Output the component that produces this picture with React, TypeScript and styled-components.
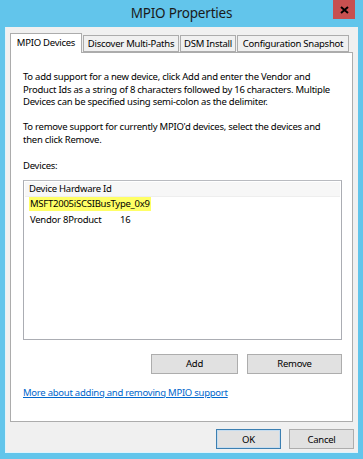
import styled, { createGlobalStyle } from "styled-components";

const GlobalStyle = createGlobalStyle`
  html, body {
    margin: 0;
    padding: 0;
    background: #62c5eb;
  }
  * {
    box-sizing: border-box;
  }
`;

const Window = styled.div`
  width: 363px;
  height: 459px;
  background: #62c5eb;
  display: flex;
  flex-direction: column;
  font-family: "Noto Sans", "Open Sans", sans-serif;
  font-size: 9.5px;
  letter-spacing: -0.25px;
  color: #000;
  overflow: hidden;
`;

const TitleBar = styled.div`
  height: 27px;
  display: grid;
  grid-template-columns: 1fr auto 1fr;
  align-items: start;
`;

const Title = styled.div`
  grid-column: 2;
  padding-top: 4px;
  font-size: 13.5px;
  letter-spacing: -0.2px;
  color: #1a1a1a;
  line-height: 19px;
`;

const CloseButton = styled.div`
  grid-column: 3;
  justify-self: end;
  margin-right: 8px;
  width: 22px;
  height: 19px;
  background: #c75050;
  display: flex;
  align-items: center;
  justify-content: center;
`;

const Client = styled.div`
  flex: 1;
  margin: 0 5px 6px 5px;
  background: #f0f0f0;
  border-left: 1px solid #dff3fb;
  border-bottom: 1px solid #dff3fb;
  padding: 5px 4px 0 4px;
  display: flex;
  flex-direction: column;
`;

const TabStrip = styled.div`
  display: flex;
  align-items: flex-end;
  height: 20px;
  position: relative;
  z-index: 1;
`;

const Tab = styled.div<{ $width: number; $active?: boolean }>`
  width: ${(p) => p.$width}px;
  height: ${(p) => (p.$active ? "20px" : "17px")};
  margin-bottom: ${(p) => (p.$active ? "-1px" : "0")};
  margin-left: ${(p) => (p.$active ? "0" : "1px")};
  padding-bottom: ${(p) => (p.$active ? "2px" : "0")};
  background: ${(p) => (p.$active ? "#ffffff" : "#f0f0f0")};
  border: 1px solid #acacac;
  border-bottom: ${(p) => (p.$active ? "none" : "1px solid #acacac")};
  display: flex;
  align-items: center;
  justify-content: center;
  white-space: nowrap;
`;

const Panel = styled.div`
  height: 370px;
  width: 343px;
  background: #fff;
  border: 1px solid #acacac;
  padding: 18px 10px 0 12px;
  display: flex;
  flex-direction: column;
`;

const Paragraph = styled.p`
  margin: 0 0 12.5px 0;
  line-height: 12.5px;
`;

const Label = styled.div`
  line-height: 13px;
`;

const ListBox = styled.div`
  margin-top: 8px;
  height: 160px;
  border: 1px solid #abadb3;
  border-top-color: #b9bbc0;
  padding: 1px;
  display: flex;
  flex-direction: column;
`;

const ListHeader = styled.div`
  height: 15px;
  background: #f7f7f7;
  border-bottom: 1px solid #eeeeee;
  padding-left: 4px;
  line-height: 14px;
`;

const ListRow = styled.div`
  height: 15px;
  display: flex;
  align-items: center;
  padding-left: 4px;
`;

const Highlight = styled.span`
  background: #ffff66;
  padding: 0 1px;
  line-height: 14px;
`;

const Cell = styled.span<{ $width?: number }>`
  display: inline-block;
  width: ${(p) => (p.$width ? `${p.$width}px` : "auto")};
  padding-left: 1px;
`;

const ButtonRow = styled.div<{ $top: number }>`
  display: flex;
  justify-content: flex-end;
  gap: 9px;
  margin-top: ${(p) => p.$top}px;
`;

const Button = styled.div<{ $width: number; $default?: boolean }>`
  width: ${(p) => p.$width}px;
  height: 20px;
  background: #e1e1e1;
  border: 1px solid ${(p) => (p.$default ? "#3c7fb1" : "#adadad")};
  box-shadow: ${(p) => (p.$default ? "inset 0 0 0 1px #c5dcef" : "none")};
  display: flex;
  align-items: center;
  justify-content: center;
`;

const Link = styled.a`
  margin-top: 12px;
  color: #0066cc;
  text-decoration: underline;
  line-height: 13px;
  align-self: flex-start;
`;

const FooterButtons = styled(ButtonRow)`
  gap: 8px;
`;

export default function App() {
  return (
    <Window>
      <GlobalStyle />
      <TitleBar>
        <Title>MPIO Properties</Title>
        <CloseButton>
          <svg width="9" height="8" viewBox="0 0 9 8">
            <path d="M1 1 L8 7 M8 1 L1 7" stroke="#000" strokeWidth="2" />
          </svg>
        </CloseButton>
      </TitleBar>
      <Client>
        <TabStrip>
          <Tab $width={72} $active>
            MPIO Devices
          </Tab>
          <Tab $width={96}>Discover Multi-Paths</Tab>
          <Tab $width={56}>DSM Install</Tab>
          <Tab $width={112}>Configuration Snapshot</Tab>
        </TabStrip>
        <Panel>
          <Paragraph>
            To add support for a new device, click Add and enter the Vendor and
            Product Ids as a string of 8 characters followed by 16 characters.
            Multiple Devices can be specified using semi-colon as the delimiter.
          </Paragraph>
          <Paragraph>
            To remove support for currently MPIO'd devices, select the devices
            and then click Remove.
          </Paragraph>
          <Label>Devices:</Label>
          <ListBox>
            <ListHeader>Device Hardware Id</ListHeader>
            <ListRow>
              <Highlight>MSFT2005iSCSIBusType_0x9</Highlight>
            </ListRow>
            <ListRow>
              <Cell $width={90}>Vendor 8Product</Cell>
              <Cell>16</Cell>
            </ListRow>
          </ListBox>
          <ButtonRow $top={14}>
            <Button $width={87}>Add</Button>
            <Button $width={95}>Remove</Button>
          </ButtonRow>
          <Link href="#">More about adding and removing MPIO support</Link>
        </Panel>
        <FooterButtons $top={7}>
          <Button $width={65} $default>
            OK
          </Button>
          <Button $width={65}>Cancel</Button>
        </FooterButtons>
      </Client>
    </Window>
  );
}
